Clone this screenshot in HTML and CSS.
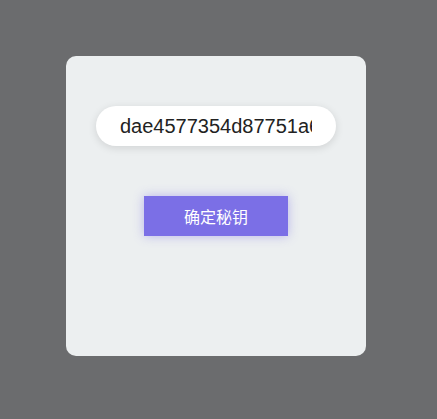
FILE: index.html
```html
<!DOCTYPE html>
<html lang="zh">
<head>
  <meta charset="UTF-8" />
  <title>秘钥</title>
  <link rel="stylesheet" href="styles.css">
</head>
<body>
  <div class="card">
    <input class="key-input" type="text" value="dae4577354d87751a6f0c1b2e9" />
    <button class="btn-ok">确定秘钥</button>
  </div>
</body>
</html>
```

FILE: styles.css
```css
html, body {
  margin: 0;
  height: 100%;
}
body {
  background: #6b6c6e;
  font-family: "Liberation Sans", "Noto Sans CJK SC", sans-serif;
  display: flex;
  justify-content: center;
  align-items: flex-start;
  padding-top: 56px;
  box-sizing: border-box;
}
.card {
  width: 300px;
  height: 300px;
  margin-left: -5px;
  background: #eceff0;
  border-radius: 10px;
  display: flex;
  flex-direction: column;
  align-items: center;
  padding-top: 50px;
  box-sizing: border-box;
}
.key-input {
  width: 240px;
  height: 40px;
  box-sizing: border-box;
  border: none;
  outline: none;
  border-radius: 20px;
  background: #fff;
  padding: 0 24px;
  font-family: "Liberation Sans", sans-serif;
  font-size: 20px;
  color: #222;
  box-shadow: 0 2px 8px rgba(0, 0, 0, 0.12);
}
.btn-ok {
  margin-top: 50px;
  width: 144px;
  height: 40px;
  border: none;
  background: #7b6fe6;
  color: #fff;
  font-family: "Noto Sans CJK SC", sans-serif;
  font-size: 16px;
  box-shadow: 0 0 10px rgba(123, 111, 230, 0.45);
  cursor: pointer;
}
```
